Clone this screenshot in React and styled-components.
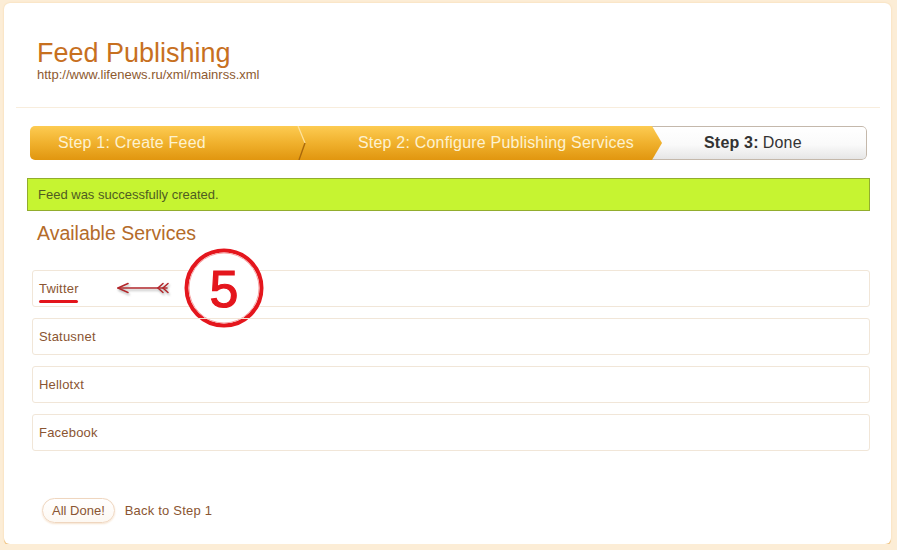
import React from 'react'
import styled, { createGlobalStyle } from 'styled-components'

const GlobalStyle = createGlobalStyle`
  html, body {
    margin: 0;
    padding: 0;
    background: #fcedd6;
    font-family: "Liberation Sans", Arial, sans-serif;
  }
`

const Panel = styled.div`
  margin: 3px 6px 0 4px;
  height: 541px;
  background: #fff;
  border-radius: 6px;
  box-shadow: 0 2px 0 #f1c789, 0 0 2px #f3d3a3;
  box-sizing: border-box;
  overflow: hidden;
`

const Header = styled.div`
  padding: 35px 0 25px 33px;
`

const Title = styled.h1`
  margin: 0;
  font-size: 27px;
  line-height: 30px;
  font-weight: normal;
  color: #c7701f;
`

const Url = styled.div`
  font-size: 13px;
  line-height: 14px;
  color: #8d5a30;
`

const Divider = styled.div`
  height: 1px;
  margin: 0 11px 0 12px;
  background: #f8eddd;
`

const Steps = styled.div`
  display: flex;
  height: 34px;
  margin: 18px 24px 0 26px;
  border-radius: 5px;
  overflow: hidden;
`

const Step = styled.div`
  position: relative;
  display: flex;
  align-items: center;
  box-sizing: border-box;
  font-size: 16px;
  letter-spacing: 0.2px;
  color: #fdf2d0;
  background: linear-gradient(#fdcb52, #f0b12d 50%, #e1960f);
  width: ${p => p.$width}px;
  padding-left: ${p => p.$pad}px;
`

const ArrowStep = styled(Step)`
  z-index: 1;
  margin-right: -10px;
  clip-path: polygon(0 0, calc(100% - 10px) 0, 100% 50%, calc(100% - 10px) 100%, 0 100%);
`

const Divide = styled.svg`
  position: absolute;
  right: -6px;
  top: 0;
  z-index: 2;
`

const CurrentStep = styled.div`
  flex: 1;
  display: flex;
  align-items: center;
  padding-left: 52px;
  font-size: 16px;
  letter-spacing: 0.2px;
  color: #333;
  background: linear-gradient(#fff, #fafafa 55%, #e6e6e6);
  border: 1px solid #c4b8ab;
  border-left: none;
  border-radius: 0 5px 5px 0;

  b {
    margin-right: 4px;
  }
`

const Notice = styled.div`
  margin: 18px 21px 0 23px;
  height: 33px;
  box-sizing: border-box;
  display: flex;
  align-items: center;
  padding-left: 10px;
  background: #c6f431;
  border: 1px solid #92ad2d;
  font-size: 13px;
  color: #4f5c22;
`

const SectionTitle = styled.h2`
  margin: 11px 0 0 33px;
  font-size: 19.5px;
  line-height: 22px;
  font-weight: normal;
  color: #b46b2a;
`

const ServiceList = styled.div`
  display: flex;
  flex-direction: column;
  gap: 11px;
  margin: 26px 21px 0 28px;
`

const Service = styled.div`
  position: relative;
  height: 37px;
  box-sizing: border-box;
  display: flex;
  align-items: center;
  padding-left: 6px;
  border: 1px solid #f1e6d8;
  border-radius: 3px;
  font-size: 13px;
  letter-spacing: 0.2px;
  color: #8a5532;
`

const Underline = styled.div`
  position: absolute;
  left: 6px;
  top: 29px;
  width: 39px;
  height: 3px;
  border-radius: 2px;
  background: #e3141b;
`

const Callout = styled.svg`
  position: absolute;
  left: 80px;
  top: -21px;
  overflow: visible;
`

const Footer = styled.div`
  display: flex;
  align-items: center;
  gap: 10px;
  margin: 47px 0 0 38px;
`

const Button = styled.button`
  height: 25px;
  padding: 0 9px;
  border: 1px solid #efd6bf;
  border-radius: 13px;
  background: linear-gradient(#fff, #fdf8f2);
  box-shadow: 0 1px 2px #f6e3cf;
  font-family: inherit;
  font-size: 13px;
  color: #8a5532;
`

const BackLink = styled.span`
  font-size: 13px;
  letter-spacing: 0.2px;
  color: #8a5532;
`

const services = ['Twitter', 'Statusnet', 'Hellotxt', 'Facebook']

const Annotation = () => (
  <>
    <Underline />
    <Callout width="160" height="80" viewBox="0 0 160 80">
      <defs>
        <filter id="sh" x="-20%" y="-50%" width="140%" height="200%">
          <feDropShadow dx="1" dy="2" stdDeviation="1.2" floodColor="#888" floodOpacity="0.6" />
        </filter>
      </defs>
      <g filter="url(#sh)" stroke="#b3262b" fill="none" strokeWidth="1.6" strokeLinecap="round">
        <line x1="5" y1="38" x2="54" y2="38" />
        <path d="M5 38 L15 33.5 M5 38 L15 42.5" />
        <path d="M50 33.5 L45 38 L50 42.5 M55 33.5 L50 38 L55 42.5" />
      </g>
      <circle cx="111" cy="38" r="37.5" fill="#fff" stroke="#e4161d" strokeWidth="4" />
      <circle cx="111" cy="38" r="35" fill="none" stroke="#f7a5a5" strokeWidth="1" />
      <text
        x="111"
        y="57"
        textAnchor="middle"
        fontFamily="Liberation Sans, Arial, sans-serif"
        fontSize="52"
        fill="#e4161d"
        stroke="#e4161d"
        strokeWidth="1.2"
      >
        5
      </text>
    </Callout>
  </>
)

export default function App() {
  return (
    <>
      <GlobalStyle />
      <Panel>
        <Header>
          <Title>Feed Publishing</Title>
          <Url>http://www.lifenews.ru/xml/mainrss.xml</Url>
        </Header>
        <Divider />
        <Steps>
          <Step $width={272} $pad={28}>
            Step 1: Create Feed
            <Divide width="12" height="34" viewBox="0 0 12 34">
              <path d="M2 0 L9 17" stroke="#fde3a0" strokeWidth="1.2" fill="none" />
              <path d="M9 17 L3 34" stroke="#a9690c" strokeWidth="1.4" fill="none" />
            </Divide>
          </Step>
          <ArrowStep $width={360} $pad={56}>Step 2: Configure Publishing Services</ArrowStep>
          <CurrentStep><b>Step 3:</b> Done</CurrentStep>
        </Steps>
        <Notice>Feed was successfully created.</Notice>
        <SectionTitle>Available Services</SectionTitle>
        <ServiceList>
          {services.map(s => (
            <Service key={s}>
              {s}
              {s === 'Twitter' && <Annotation />}
            </Service>
          ))}
        </ServiceList>
        <Footer>
          <Button>All Done!</Button>
          <BackLink>Back to Step 1</BackLink>
        </Footer>
      </Panel>
    </>
  )
}
